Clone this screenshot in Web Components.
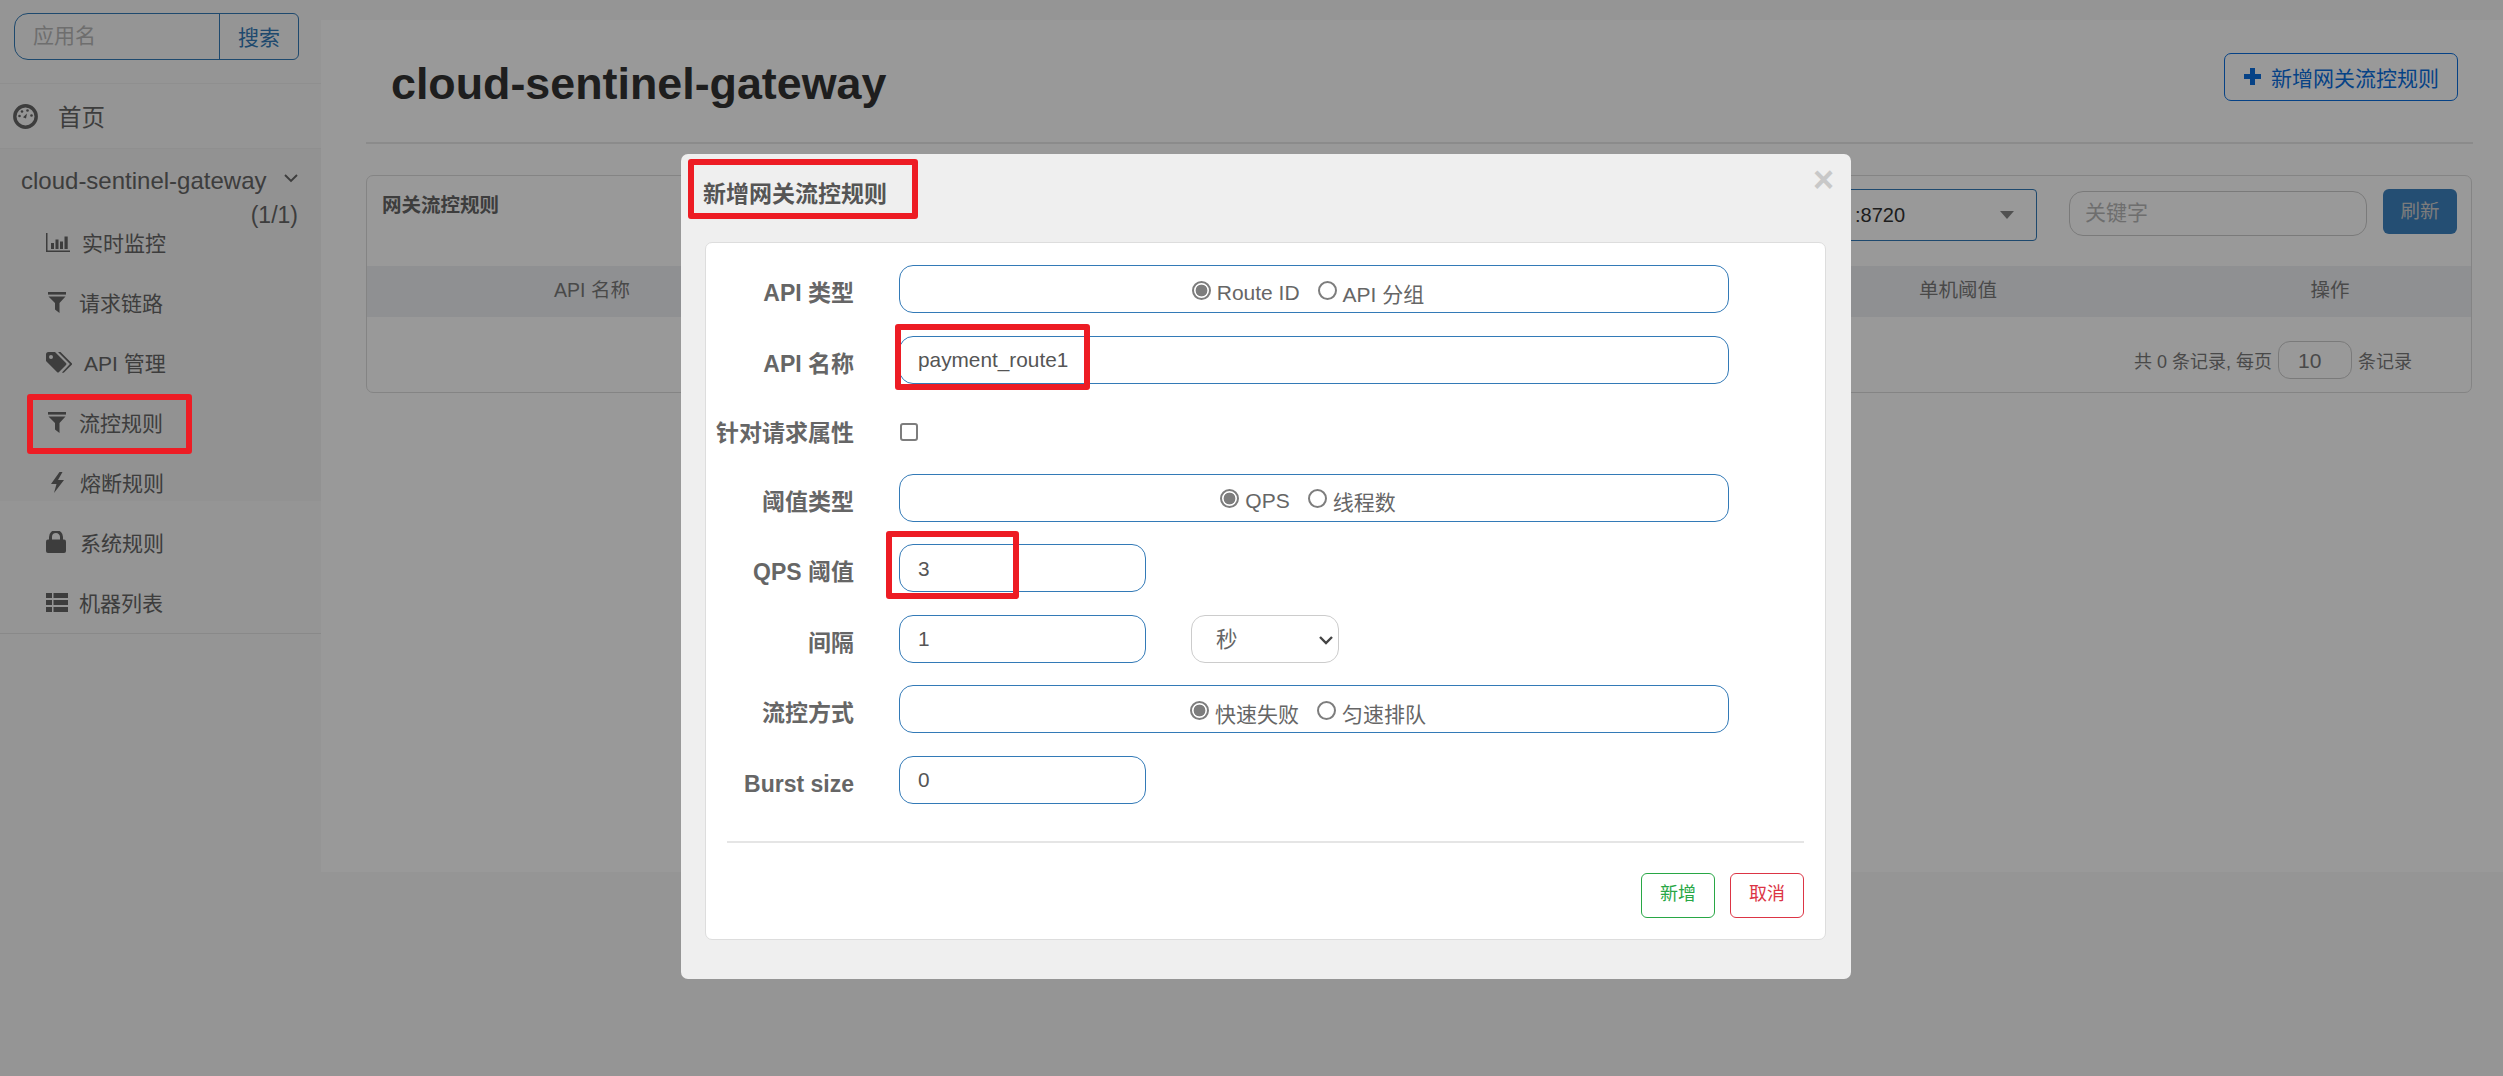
<!DOCTYPE html>
<html lang="zh"><head><meta charset="utf-8"><title>cloud-sentinel-gateway</title>
<style>
html,body{margin:0;height:100%;overflow:hidden}
body{background:#f8f8f8;font-family:"Liberation Sans","Noto Sans CJK SC",sans-serif;color:#555;display:flex;height:1076px}
</style></head>
<body>
<app-sidebar>
  <search-box></search-box>
  <home-link>首页</home-link>
  <nav-group name="cloud-sentinel-gateway" count="(1/1)">
    <nav-item icon="chart" gap="12">实时监控</nav-item>
    <nav-item icon="filter" gap="13">请求链路</nav-item>
    <nav-item icon="tags" gap="12">API 管理</nav-item>
    <nav-item icon="filter" gap="13">流控规则</nav-item>
    <nav-item icon="bolt" gap="15">熔断规则</nav-item>
    <nav-item icon="lock" gap="14">系统规则</nav-item>
    <nav-item icon="list" gap="11">机器列表</nav-item>
  </nav-group>
</app-sidebar>
<app-main>
  <page-head>cloud-sentinel-gateway</page-head>
  <rules-panel></rules-panel>
</app-main>
<modal-layer>
  <modal-dialog heading="新增网关流控规则">
    <form-row label="API 类型"><radio-choice a="Route ID" b="API 分组"></radio-choice></form-row>
    <form-row label="API 名称"><text-field wide value="payment_route1"></text-field></form-row>
    <form-row label="针对请求属性" kind="check"><input-check></input-check></form-row>
    <form-row label="阈值类型"><radio-choice a="QPS" b="线程数"></radio-choice></form-row>
    <form-row label="QPS 阈值"><text-field value="3"></text-field></form-row>
    <form-row label="间隔"><text-field value="1"></text-field><unit-select>秒</unit-select></form-row>
    <form-row label="流控方式"><radio-choice a="快速失败" b="匀速排队"></radio-choice></form-row>
    <form-row label="Burst size"><text-field value="0"></text-field></form-row>
  </modal-dialog>
</modal-layer>
<red-mark x="27" y="394" w="165" h="60"></red-mark>
<red-mark x="688" y="159" w="230" h="60"></red-mark>
<red-mark x="895" y="324" w="195" h="66"></red-mark>
<red-mark x="886" y="531" w="133" h="68"></red-mark>
<script>
const ICONS={
 chart:[24,19,'<path d="M0 0H1.5V17.5H24V19H0Z"/><rect x="5" y="10" width="3" height="6"/><rect x="9.5" y="6.5" width="3" height="9.5"/><rect x="14" y="8.5" width="3" height="7.5"/><rect x="18.5" y="3.5" width="3.2" height="12.5"/>'],
 filter:[18,21,'<rect width="18" height="2.6"/><path d="M.5 4.5H17.5L11.5 11V21L7 17.5V11Z"/>'],
 tags:[26,21,'<path fill-rule="evenodd" d="M0 2.5Q0 0 2.5 0H9L20 11Q21 12 20 13L13 20Q12 21 11 20L0 9ZM5 3A2 2 0 1 0 5 7 2 2 0 1 0 5 3Z"/><path d="M12 0H14.5L26 11.5Q26.5 12 26 12.5L18 20.5Q17 21 16 20.5L23.5 12.5Q24 12 23.5 11.5Z"/>'],
 bolt:[15,21,'<path d="M9.5 0L1 12H6.5L4 21L14 8H8L12.5 0Z"/>'],
 lock:[20,22,'<rect y="8.5" width="20" height="13.5" rx="2"/><path d="M4.5 9V6a5.5 5.5 0 0 1 11 0V9" fill="none" stroke="currentColor" stroke-width="3"/>'],
 list:[22,19,'<rect width="6" height="5"/><rect x="7.5" width="14.5" height="5"/><rect y="7" width="6" height="5"/><rect x="7.5" y="7" width="14.5" height="5"/><rect y="14" width="6" height="5"/><rect x="7.5" y="14" width="14.5" height="5"/>'],
 gauge:[25,25,'<circle cx="12.5" cy="12.5" r="10.7" fill="none" stroke="currentColor" stroke-width="3.4"/><circle cx="6.5" cy="12" r="1.3"/><circle cx="9" cy="7.5" r="1.3"/><circle cx="14.5" cy="6.5" r="1.3"/><circle cx="18.5" cy="11.5" r="1.3"/><path d="M10 13.2L14 9.5L13 14.5Z"/>'],
 plus:[17,17,'<path d="M6 0H11V6H17V11H11V17H6V11H0V6H6Z"/>']
};
function def(name,css,html,init){
  customElements.define(name,class extends HTMLElement{
    connectedCallback(){
      if(this.shadowRoot)return;
      const a=k=>this.getAttribute(k)??'';
      const r=this.attachShadow({mode:'open'});
      r.innerHTML='<style>'+css+'</style>'+(typeof html==='function'?html(a,this):html);
      if(init)init(this,r,a);
    }
  });
}
const icon=(n,c)=>{const[w,h,p]=ICONS[n];return `<svg width="${w}" height="${h}" viewBox="0 0 ${w} ${h}" fill="currentColor" style="display:block;flex:none${c?';'+c:''}" aria-hidden="true">${p}</svg>`};

def('app-sidebar',':host{display:block;width:321px;flex:none;color:#666}','<slot></slot>');
def('search-box',`:host{display:block;height:84px;box-sizing:border-box;padding:13px 22px 0 14px;border-bottom:1px solid #eee}
 .b{display:flex;height:47px;box-sizing:border-box;border:1px solid #337ab7;border-radius:14px 6px 6px 14px}
 .p{width:204px;box-sizing:border-box;padding:0 0 2px 18px;font-size:21px;line-height:43px;color:#b8b8b8}
 .s{flex:1;border-left:1px solid #337ab7;text-align:center;font-size:21px;line-height:47px;color:#337ab7}`,
 '<div class="b"><div class="p">应用名</div><div class="s">搜索</div></div>');
def('home-link',`:host{display:flex;align-items:center;height:65px;box-sizing:border-box;padding:0 0 1px 13px;border-bottom:1px solid #eee;font-size:23.5px;color:#666}
 svg{margin:1px 20px 0 0}`,()=>icon('gauge')+'<slot></slot>');
def('nav-group',`:host{display:block;height:485px;box-sizing:border-box;border-bottom:1px solid #e4e4e4;background:linear-gradient(#f3f3f3 0,#f3f3f3 352px,#f8f8f8 352px)}
 .n{position:relative;padding:15px 0 0 21px;font-size:24px;line-height:34px;height:34px}
 .n svg{position:absolute;left:284px;top:25px}
 .c{padding-right:23px;text-align:right;font-size:23px;line-height:34px;height:14px}
 .l{margin-top:0}`,
 a=>`<div class="n">${a('name')}<svg width="14" height="9" viewBox="0 0 14 9" fill="none" stroke="currentColor" stroke-width="1.9"><path d="M1 1L7 7L13 1"/></svg></div><div class="c">${a('count')}</div><div class="l"><slot></slot></div>`);
def('nav-item',`:host{display:flex;align-items:center;height:60px;padding-left:46px;font-size:21px;color:#666}`,
 (a)=>{const n=a('icon');return icon(n,'margin-right:'+a('gap')+'px'+(n==='filter'?';margin-left:2px;':'')+(n==='bolt'?';margin-left:4px':''))+'<slot></slot>'});

def('app-main',':host{display:block;flex:1;min-width:0;margin-top:20px;height:852px;background:#fff}','<slot></slot>');
def('page-head',`:host{display:flex;align-items:center;justify-content:space-between;height:122px;margin:0 30px 0 45px;border-bottom:2px solid #e8e8e8;color:#333}
 h1{margin:3px 0 0 25px;font-size:44.8px;font-weight:700;line-height:56px}
 button{all:unset;display:flex;align-items:center;box-sizing:border-box;width:234px;height:48px;margin:-9px 15px 0 0;padding-left:19px;border:1px solid #0a6fe0;border-radius:7px;color:#0a6fe0;font-size:21px}
 svg{margin-right:10px}`,
 ()=>`<h1><slot></slot></h1><button>${icon('plus')}新增网关流控规则</button>`);
def('rules-panel',`:host{display:block;margin:31px 31px 0 45px;height:218px;box-sizing:border-box;border:1px solid #ddd;border-radius:7px;color:#7b7b7b}
 .top{display:flex;height:90px;box-sizing:border-box;padding:13px 14px 0 15px;align-items:flex-start}
 .t{flex:1;font-size:19.5px;font-weight:700;line-height:30px;color:#666;margin-top:1px}
 .sel{position:relative;width:337px;height:52px;box-sizing:border-box;border:1px solid #337ab7;border-radius:4px;padding-left:154px;font-size:20px;line-height:50px;color:#333}
 .sel i{position:absolute;left:299px;top:21px;border:7px solid transparent;border-top:8px solid #888;border-bottom:0;width:0;height:0;margin-left:0}
 .kw{margin:2px 16px 0 32px;width:298px;height:45px;box-sizing:border-box;border:1px solid #ccc;border-radius:14px;padding-left:15px;font-size:21px;line-height:42px;color:#b8b8b8}
 .rf{width:74px;height:45px;border-radius:6px;background:#3c82c0;color:#cfcfcf;text-align:center;font-size:19.5px;line-height:44px}
 .th{display:grid;grid-template-columns:450px 910px 462px 1fr;height:51px;background:#eef0f3;font-size:19.5px;line-height:49px;text-align:center}
 .pg{display:flex;justify-content:flex-end;align-items:center;margin-top:24px;padding-right:59px;font-size:18px;color:#7b7b7b;height:38px}
 .sz{width:74px;height:38px;box-sizing:border-box;margin:0 6px;border:1px solid #ccc;border-radius:12px;padding-left:19px;font-size:21px;line-height:38px}`,
 `<div class="top"><div class="t">网关流控规则</div><div class="sel">:8720<i></i></div><div class="kw">关键字</div><div class="rf">刷新</div></div>
  <div class="th"><span>API 名称</span><span></span><span>单机阈值</span><span>操作</span></div>
  <div class="pg"><span>共 0 条记录, 每页</span><span class="sz">10</span><span>条记录</span></div>`);

def('modal-layer',':host{position:fixed;inset:0;background:rgba(0,0,0,.4);padding:154px 0 0 681px;box-sizing:border-box}','<slot></slot>');
def('modal-dialog',`:host{display:block;width:1170px;height:825px;box-sizing:border-box;padding:0 25px 39px 24px;background:#efefef;border-radius:7px;position:relative;color:#555}
 header{height:88px;box-sizing:border-box;padding:24px 0 0 0;margin-left:-2px;font-size:23px;font-weight:700;line-height:32px;color:#555}
 .x{position:absolute;right:17px;top:8px;font-size:36px;line-height:36px;font-weight:700;color:#c8c8c8}
 .body{height:698px;box-sizing:border-box;background:#fff;border:1px solid #ddd;border-radius:7px;padding:22px 21px 0 0}
 .f{height:538px}
 hr{margin:38px 0 0 21px;border:0;border-top:2px solid #e5e5e5}
 .acts{display:flex;justify-content:flex-end;gap:15px;margin-top:30px}
 .acts span{width:74px;height:45px;box-sizing:border-box;border:1px solid;border-radius:6px;text-align:center;font-size:18px;line-height:41px}
 .g{color:#28a745}.r{color:#dc3545}`,
 a=>`<header>${a('heading')}</header><span class="x">×</span><div class="body"><div class="f"><slot></slot></div><hr><div class="acts"><span class="g">新增</span><span class="r">取消</span></div></div>`);
def('form-row',`:host{display:flex;height:48px;margin-bottom:22.5px}
 :host([kind=check]){height:45px}
 label{width:148px;flex:none;margin-right:45px;text-align:right;font-size:23px;font-weight:700;line-height:56px;color:#666;white-space:nowrap}
 :host([kind=check]) label{line-height:55px}
 .c{display:flex;flex:1;min-width:0}`,
 a=>`<label>${a('label')}</label><div class="c"><slot></slot></div>`);
def('text-field',`:host{display:block;width:247px;height:48px}
 :host([wide]){width:830px}
 input{all:unset;display:block;width:100%;height:100%;box-sizing:border-box;border:1px solid #337ab7;border-radius:14px;padding:1px 18px 0;font:20.8px "Liberation Sans",sans-serif;color:#555}`,
 a=>`<input value="${a('value')}" aria-label="value">`);
def('radio-choice',`:host{display:flex;width:830px;height:48px;box-sizing:border-box;border:1px solid #337ab7;border-radius:14px;justify-content:center;align-items:center;padding:7px 12px 0 0;font-size:21px;color:#666}
 label{display:flex;align-items:center;white-space:nowrap}
 label+label{margin-left:18px}
 input{appearance:none;-webkit-appearance:none;box-sizing:border-box;width:19px;height:19px;margin:-5px 6px 0 0;border:2px solid #7d7d7d;border-radius:50%;background:#fff;flex:none}
 input:checked{background:radial-gradient(circle,#7d7d7d 0 5.6px,#fff 6.2px)}`,
 a=>`<label><input type="radio" name="r" checked>${a('a')}</label><label><input type="radio" name="r">${a('b')}</label>`);
def('input-check',`:host{display:block;padding-top:17px}
 input{appearance:none;-webkit-appearance:none;display:block;box-sizing:border-box;width:18px;height:18px;margin:0 0 0 1px;border:2px solid #7d7d7d;border-radius:3px;background:#fff}`,
 '<input type="checkbox" aria-label="check">');
def('unit-select',`:host{position:relative;display:block;width:148px;height:48px;margin-left:45px;box-sizing:border-box;border:1px solid #ccc;border-radius:14px;padding-left:24px;font-size:21.5px;line-height:48px;color:#666}
 svg{position:absolute;right:5px;top:20px}`,
 '<slot></slot><svg width="14" height="9" viewBox="0 0 14 9" fill="none" stroke="#444" stroke-width="2.4"><path d="M1 1L7 7L13 1"/></svg>');
def('red-mark',`:host{position:fixed;box-sizing:border-box;border:6px solid #ed1c24;border-radius:3px;pointer-events:none}`,'',
 (el,r,a)=>{el.style.left=a('x')+'px';el.style.top=a('y')+'px';el.style.width=a('w')+'px';el.style.height=a('h')+'px'});
</script>
</body></html>
